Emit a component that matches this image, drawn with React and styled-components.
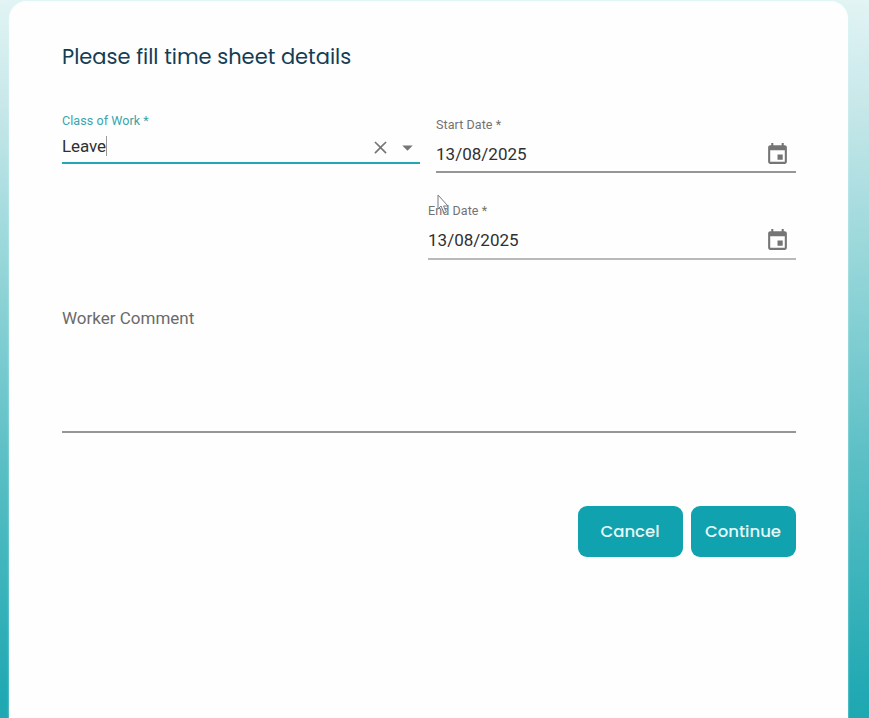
import React from "react";
import styled, { createGlobalStyle } from "styled-components";

const GlobalStyle = createGlobalStyle`
  *, *::before, *::after { box-sizing: border-box; }
  body { margin: 0; overflow: hidden; font-family: Roboto, sans-serif; }
`;

const Page = styled.div`
  height: 718px;
  padding: 1px 21px 0 9px;
  background: linear-gradient(180deg, #e2f4f4 0%, #c9e8ea 14%, #93d5d8 38%, #57bec4 66%, #22a9b3 96%, #1fa8b1 100%);
`;

const Card = styled.main`
  height: 740px;
  padding: 40px 52px 0 53px;
  background: #fefefe;
  border-radius: 18px 18px 0 0;
  box-shadow: 0 0 2px rgba(220, 255, 255, 0.8);
`;

const Title = styled.h1`
  margin: 0;
  height: 68px;
  font: 400 21px/32px Poppins, sans-serif;
  color: #143d54;
  white-space: nowrap;
`;

const Fields = styled.div`
  display: flex;
  justify-content: space-between;
  height: 193px;
`;

const Dates = styled.div`
  display: flex;
  flex-direction: column;
  align-items: flex-end;
  gap: 30px;
  padding-top: 8px;
`;

const Field = styled.div`
  width: ${({ $width }) => $width}px;
  height: ${({ $height }) => $height}px;
  padding-top: ${({ $top }) => $top || 0}px;
  flex: none;
  border-bottom: 2px solid ${({ $line }) => $line};
`;

const Label = styled.label`
  display: block;
  height: 16px;
  font-size: 12.5px;
  line-height: 16px;
  letter-spacing: 0.08px;
  color: ${({ $active }) => ($active ? "#35a5af" : "#727272")};
  white-space: nowrap;
`;

const Control = styled.div`
  display: flex;
  align-items: center;
  height: 24px;
  margin-top: ${({ $gap }) => $gap}px;
`;

const Value = styled.span`
  flex: 1;
  display: flex;
  align-items: center;
  padding-bottom: ${({ $lift }) => $lift || 0}px;
  font-size: 17px;
  line-height: 20px;
  letter-spacing: ${({ $spacing }) => $spacing}px;
  color: #303030;
`;

const Caret = styled.i`
  width: 1px;
  height: 20px;
  background: #999;
`;

const Icon = styled.svg`
  display: block;
  flex: none;
  width: ${({ $size }) => $size}px;
  height: ${({ $size }) => $size}px;
  margin-right: ${({ $right }) => $right || 0}px;
  fill: #757575;
`;

const Pointer = styled.svg`
  position: absolute;
  left: 436px;
  top: 194px;
  width: 14px;
  height: 21px;
`;

const Comment = styled.div`
  height: 131px;
  padding-top: 6px;
  border-bottom: 2px solid #969696;
  font-size: 17px;
  line-height: 20px;
  color: #6a6a6a;
`;

const Actions = styled.div`
  display: flex;
  justify-content: flex-end;
  gap: 8px;
  margin-top: 73px;
`;

const Button = styled.button`
  width: 105px;
  height: 51px;
  padding: 0 1px 0 0;
  border: 0;
  border-radius: 9px;
  background: #10a2af;
  color: #e4f8f8;
  font: 500 16.5px/24px Poppins, sans-serif;
`;

function DateField({ label, width, height, line }) {
  return (
    <Field $width={width} $height={height} $line={line}>
      <Label>{label}</Label>
      <Control $gap={9}>
        <Value $spacing={0.02} $lift={1}>13/08/2025</Value>
        <Icon viewBox="0 0 24 24" $size={25} $right={6}>
          <path d="M17 12h-5v5h5v-5zM16 1v2H8V1H6v2H5c-1.11 0-1.99.9-1.99 2L3 19c0 1.1.89 2 2 2h14c1.1 0 2-.9 2-2V5c0-1.1-.9-2-2-2h-1V1h-2zm3 18H5V8h14v11z" />
        </Icon>
      </Control>
    </Field>
  );
}

export default function App() {
  return (
    <Page>
      <GlobalStyle />
      <Card>
        <Title>Please fill time sheet details</Title>
        <Fields>
          <Field $width={358} $height={55} $top={4} $line="#24a7b5">
            <Label $active>Class of Work *</Label>
            <Control $gap={6}>
              <Value $spacing={-0.1} $lift={2}>Leave<Caret /></Value>
              <Icon viewBox="0 0 24 24" $size={21} $right={4}>
                <path d="M19 6.3 17.7 5 12 10.7 6.3 5 5 6.3l5.7 5.7L5 17.7 6.3 19l5.7-5.7 5.7 5.7 1.3-1.3-5.7-5.7z" />
              </Icon>
              <Icon viewBox="0 0 24 24" $size={25}>
                <path d="m7 10 5 5 5-5z" />
              </Icon>
            </Control>
          </Field>
          <Dates>
            <DateField label="Start Date *" width={360} height={56} line="#969696" />
            <DateField label="End Date *" width={368} height={57} line="#b9b9b9" />
          </Dates>
        </Fields>
        <Comment>Worker Comment</Comment>
        <Actions>
          <Button>Cancel</Button>
          <Button>Continue</Button>
        </Actions>
      </Card>
      <Pointer viewBox="0 0 14 21">
        <path d="M2 1v14l3-3 3 7 2.5-1-3-6H12z" fill="#fff" fillOpacity=".7" stroke="#777b83" strokeWidth="1" />
      </Pointer>
    </Page>
  );
}
